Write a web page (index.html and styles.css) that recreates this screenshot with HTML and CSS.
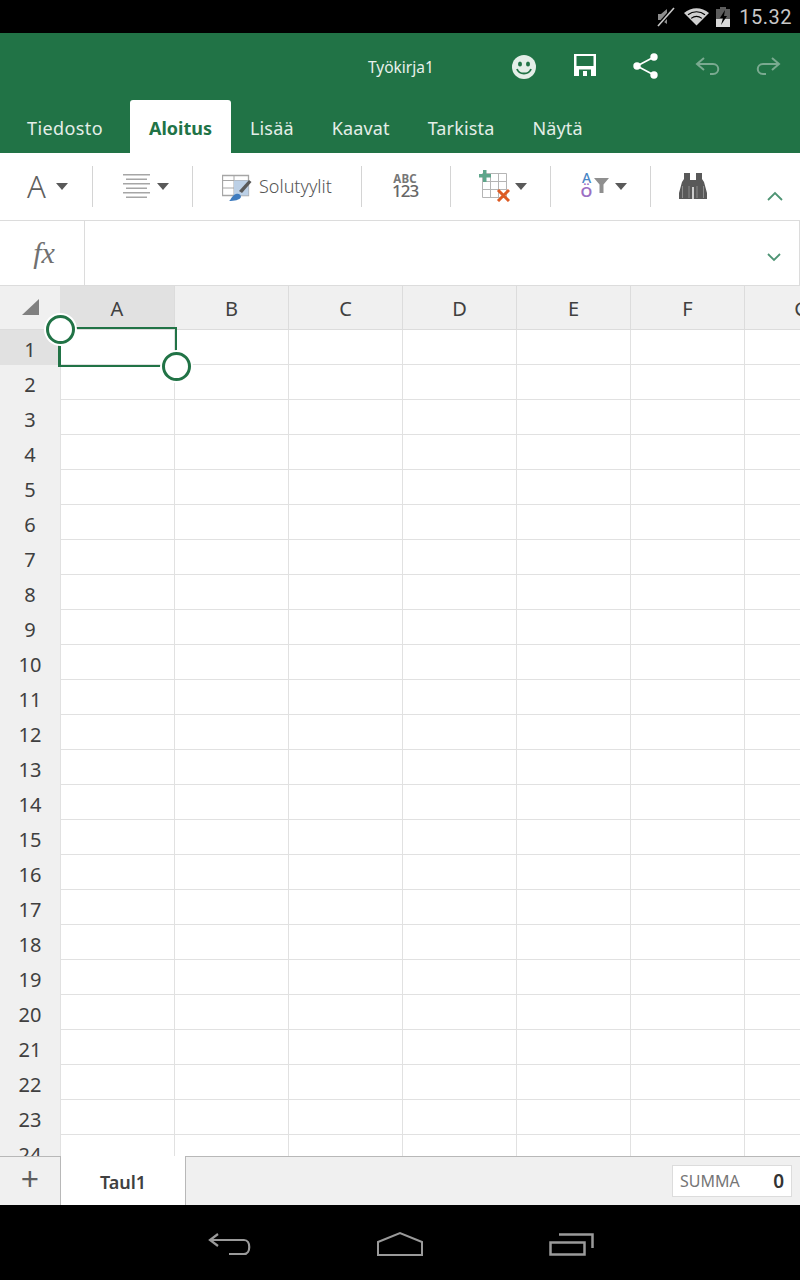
FILE: index.html
```html
<!DOCTYPE html>
<html lang="fi">

<head>
    <meta charset="UTF-8">
    <meta name="viewport" content="width=device-width, initial-scale=1.0">
    <title>Työkirja1</title>
    <link rel="stylesheet" href="styles.css">
</head>

<body>
    <!-- Android status bar -->
    <div class="status-bar">
        <svg class="st-mute" width="18" height="20" viewBox="0 0 18 20">
            <path d="M1 7h3l6-5v15l-6-4H1z" fill="#8c8c8c"/>
            <path d="M1 19L17 1" stroke="#000" stroke-width="4"/>
            <path d="M1 19L17 1" stroke="#c8c8c8" stroke-width="1.6"/>
        </svg>
        <svg class="st-wifi" width="25" height="20" viewBox="0 0 28 20">
            <path d="M14 19.500L0 5.500C8 -1.500 20 -1.500 28 5.500z" fill="#d0d0d0"/>
            <path d="M4.500 7.500C10 3 18 3 23.500 7.500M8 11.500C12 8.500 16 8.500 20 11.500" fill="none" stroke="#000" stroke-width="1.3"/>
        </svg>
        <svg class="st-batt" width="14" height="20" viewBox="0 0 14 20">
            <path d="M4 0h6v2h4v18H0V2h4z" fill="#5c5c5c"/>
            <path d="M0 12h14v8H0z" fill="#d8d8d8"/>
            <path d="M9 3L4 11h3l-2 7 6-9H8z" fill="#000"/>
        </svg>
        <span class="clock">15.32</span>
    </div>

    <!-- Title bar -->
    <div class="title-bar">
        <span class="doc-name">Työkirja1</span>
        <svg class="tb-icon ic-smile" width="26" height="26" viewBox="0 0 26 26">
            <circle cx="13" cy="13" r="12" fill="#e4eee8"/>
            <ellipse cx="9" cy="10" rx="2" ry="2.6" fill="#217346"/>
            <ellipse cx="17" cy="10" rx="2" ry="2.6" fill="#217346"/>
            <path d="M6 15c2 6 12 6 14 0" fill="none" stroke="#217346" stroke-width="1.8"/>
        </svg>
        <svg class="tb-icon ic-save" width="24" height="24" viewBox="0 0 24 24">
            <path d="M1 1h22v22H1z" fill="#fff"/>
            <path d="M3.500 3h17v10h-17z" fill="#217346"/>
            <path d="M6 16.500h12v6.500H6z" fill="#217346"/>
            <path d="M10 18h4v5h-4z" fill="#fff"/>
        </svg>
        <svg class="tb-icon ic-share" width="28" height="28" viewBox="0 0 28 28">
            <path d="M22 5L5 14l17 9" fill="none" stroke="#fff" stroke-width="1.7"/>
            <circle cx="22" cy="5" r="3.700" fill="#fff"/>
            <circle cx="5" cy="14" r="3.700" fill="#fff"/>
            <circle cx="22" cy="23" r="3.700" fill="#fff"/>
        </svg>
        <svg class="tb-icon ic-undo" width="26" height="20" viewBox="0 0 26 20">
            <path d="M9 2L2 8l7 6M2 8h16c7 0 7 10 0 10h-3" fill="none" stroke="#7aaa90" stroke-width="2"/>
        </svg>
        <svg class="tb-icon ic-redo" width="26" height="20" viewBox="0 0 26 20">
            <path d="M17 2l7 6-7 6M24 8H8c-7 0-7 10 0 10h3" fill="none" stroke="#7aaa90" stroke-width="2"/>
        </svg>
    </div>

    <!-- Ribbon tabs -->
    <div class="tabs">
        <span class="tab tab-file">Tiedosto</span>
        <span class="tab active">Aloitus</span>
        <span class="tab">Lisää</span>
        <span class="tab">Kaavat</span>
        <span class="tab">Tarkista</span>
        <span class="tab">Näytä</span>
    </div>

    <!-- Ribbon commands -->
    <div class="ribbon">
        <div class="group g-font">
            <span class="font-a">A</span>
            <span class="caret"></span>
        </div>
        <div class="group g-align">
            <svg width="27" height="24" viewBox="0 0 27 24">
                <path d="M0 .75h27M3 5.250h21M0 9.750h27M3 14.250h21M0 18.750h27M3 23.250h21" stroke="#a6a6a6" stroke-width="1.5"/>
            </svg>
            <span class="caret"></span>
        </div>
        <div class="group g-styles">
            <svg class="ic-styles" width="30" height="27" viewBox="0 0 30 27">
                <path d="M.5 1.500h26v20H.5z" fill="#fff" stroke="#a6a6a6" stroke-width="1.300"/>
                <path d="M.5 6.500h26M12 1.500v20M.5 14h11.500" stroke="#a6a6a6"/>
                <path d="M12 6.500h14.500v15H12z" fill="#bcd0e6"/>
                <path d="M17 17L27 6l2.500 2L20 19z" fill="#595959"/>
                <path d="M7 27c2-1 3-6 7-7 3-1 5 1 5 3-1 3-7 4-12 4z" fill="#3f7cbf"/>
            </svg>
            <span class="styles-label">Solutyylit</span>
        </div>
        <div class="group g-number">
            <div class="abc">
                <span class="abc-top">ABC</span>
                <span class="abc-bottom">123</span>
            </div>
        </div>
        <div class="group g-insert">
            <svg width="31" height="32" viewBox="0 0 31 32">
                <path d="M3.500 3.500h24v24h-24zM3.500 11.500h24M3.500 19.500h24M11.500 3.500v24M19.500 3.500v24" fill="none" stroke="#b5b5b5"/>
                <path d="M4 0h3.500v4H12v3.500H7.500V12H4V7.500H0V4h4z" fill="#5ea68b"/>
                <path d="M19 20l11 11M30 20L19 31" stroke="#dd5b24" stroke-width="3"/>
            </svg>
            <span class="caret caret-near"></span>
        </div>
        <div class="group g-sort">
            <div class="sort-letters">
                <span class="sort-a">A</span>
                <span class="sort-o">Ö</span>
            </div>
            <svg class="funnel" width="15" height="15" viewBox="0 0 15 15">
                <path d="M0 0h15L9.500 6.500V15h-4V6.500z" fill="#8f8f8f"/>
            </svg>
            <span class="caret caret-sort"></span>
        </div>
        <div class="group g-find">
            <svg width="28" height="26" viewBox="0 0 28 26">
                <path d="M5 0h6v7h6V0h6v6l2 3 3 11v6H14.700V14h-1.400v12H0v-6l3-11 2-3z" fill="#595959"/>
                <path d="M3.500 13v12M10 13v12M18 13v12M24.500 13v12" stroke="#9a9a9a" stroke-width=".8"/>
            </svg>
        </div>
        <svg class="collapse" width="16" height="10" viewBox="0 0 16 10">
            <path d="M1 9l7-7 7 7" fill="none" stroke="#4e9474" stroke-width="1.8"/>
        </svg>
    </div>

    <!-- Formula bar -->
    <div class="formula-bar">
        <div class="fx"><span>fx</span></div>
        <div class="formula-input">
            <svg width="14" height="9" viewBox="0 0 14 9">
                <path d="M1 1l6 6 6-6" fill="none" stroke="#4e9474" stroke-width="1.8"/>
            </svg>
        </div>
    </div>

    <!-- Sheet -->
    <div class="sheet">
        <div class="col-head">
            <div class="corner"><span class="corner-mark"></span></div>
            <div class="col selected">A</div>
            <div class="col">B</div>
            <div class="col">C</div>
            <div class="col">D</div>
            <div class="col">E</div>
            <div class="col">F</div>
            <div class="col">G</div>
        </div>
        <div class="rows">
            <div class="row"><span class="row-num selected">1</span></div>
            <div class="row"><span class="row-num">2</span></div>
            <div class="row"><span class="row-num">3</span></div>
            <div class="row"><span class="row-num">4</span></div>
            <div class="row"><span class="row-num">5</span></div>
            <div class="row"><span class="row-num">6</span></div>
            <div class="row"><span class="row-num">7</span></div>
            <div class="row"><span class="row-num">8</span></div>
            <div class="row"><span class="row-num">9</span></div>
            <div class="row"><span class="row-num">10</span></div>
            <div class="row"><span class="row-num">11</span></div>
            <div class="row"><span class="row-num">12</span></div>
            <div class="row"><span class="row-num">13</span></div>
            <div class="row"><span class="row-num">14</span></div>
            <div class="row"><span class="row-num">15</span></div>
            <div class="row"><span class="row-num">16</span></div>
            <div class="row"><span class="row-num">17</span></div>
            <div class="row"><span class="row-num">18</span></div>
            <div class="row"><span class="row-num">19</span></div>
            <div class="row"><span class="row-num">20</span></div>
            <div class="row"><span class="row-num">21</span></div>
            <div class="row"><span class="row-num">22</span></div>
            <div class="row"><span class="row-num">23</span></div>
            <div class="row"><span class="row-num">24</span></div>
        </div>
        <!-- Selected cell with its two drag handles -->
        <div class="selection">
            <span class="handle handle-start"></span>
            <span class="handle handle-end"></span>
        </div>
    </div>

    <!-- Sheet tabs and sum -->
    <div class="sheet-bar">
        <div class="add-sheet">+</div>
        <div class="sheet-tab">Taul1</div>
        <div class="sheet-rest">
            <div class="sum">
                <span class="sum-label">SUMMA</span>
                <span class="sum-value">0</span>
            </div>
        </div>
    </div>

    <!-- Android navigation bar -->
    <div class="nav-bar">
        <svg class="nav-back" width="44" height="26" viewBox="0 0 44 26">
            <path d="M10 3L2 9l8 6M2 9h34c7 0 7 14 0 14H21" fill="none" stroke="#9a9a9a" stroke-width="2.200"/>
        </svg>
        <svg class="nav-home" width="48" height="26" viewBox="0 0 48 26">
            <path d="M2 11L24 2l22 9v13H2z" fill="none" stroke="#9a9a9a" stroke-width="2"/>
        </svg>
        <svg class="nav-recent" width="46" height="26" viewBox="0 0 46 26">
            <path d="M1.500 11.500h34v12h-34z" fill="none" stroke="#9a9a9a" stroke-width="2.500"/>
            <path d="M10 3.500h33.500V17" fill="none" stroke="#9a9a9a" stroke-width="2.500"/>
        </svg>
    </div>
</body>

</html>
```

FILE: styles.css
```css
html, body {
    margin: 0;
    padding: 0;
    height: 100%;
    overflow: hidden;
}

body {
    width: 800px;
    height: 1280px;
    display: flex;
    flex-direction: column;
    font-family: "Noto Sans", "Open Sans", sans-serif;
    background: #fff;
}

/* Status bar */
.status-bar {
    height: 33px;
    background: #000;
    display: flex;
    align-items: center;
    justify-content: flex-end;
    padding-right: 8px;
    flex-shrink: 0;
}

.st-mute {
    margin-right: 9px;
}

.st-wifi {
    margin-right: 7px;
}

.st-batt {
    margin-right: 9px;
}

.clock {
    font-family: Roboto, sans-serif;
    font-size: 20px;
    letter-spacing: 0.5px;
    color: #c8c8c8;
}

/* Title bar */
.title-bar {
    height: 67px;
    background: #217346;
    position: relative;
    display: flex;
    align-items: center;
    flex-shrink: 0;
}

.doc-name {
    position: absolute;
    left: 368px;
    top: 23px;
    font-size: 15.5px;
    line-height: 22px;
    color: #e9f1ec;
}

.tb-icon {
    position: absolute;
}

.ic-smile {
    left: 511px;
    top: 21px;
}

.ic-save {
    left: 573px;
    top: 20px;
}

.ic-share {
    left: 632px;
    top: 19px;
}

.ic-undo {
    left: 695px;
    top: 23px;
}

.ic-redo {
    left: 755px;
    top: 23px;
}

/* Ribbon tabs */
.tabs {
    height: 53px;
    background: #217346;
    display: flex;
    padding-left: 8px;
    flex-shrink: 0;
}

.tab {
    padding: 0 19px;
    font-size: 18px;
    letter-spacing: 0.15px;
    line-height: 56px;
    color: #e4eee8;
}

.tab-file {
    margin-right: 8px;
    letter-spacing: 0.4px;
}

.tab.active {
    background: #fff;
    color: #217346;
    font-weight: 700;
    letter-spacing: 0;
    border-radius: 3px 3px 0 0;
}

/* Ribbon commands */
.ribbon {
    height: 67px;
    background: #fff;
    display: flex;
    align-items: center;
    position: relative;
    flex-shrink: 0;
}

.group {
    height: 41px;
    box-sizing: border-box;
    display: flex;
    align-items: center;
    border-right: 1px solid #d4d4d4;
    margin-top: -1px;
}

.g-font {
    width: 93px;
    padding-left: 27px;
}

.g-align {
    width: 100px;
    padding-left: 30px;
}

.g-styles {
    width: 169px;
    padding-left: 29px;
}

.g-number {
    width: 89px;
    padding-left: 30px;
}

.g-insert {
    width: 100px;
    padding-left: 28px;
}

.g-sort {
    width: 100px;
    padding-left: 29px;
}

.g-find {
    width: 86px;
    padding-left: 28px;
    border-right: none;
}

.caret {
    width: 0;
    height: 0;
    border-left: 6px solid transparent;
    border-right: 6px solid transparent;
    border-top: 7px solid #595959;
    margin-left: 7px;
}

.caret-near {
    margin-left: 5px;
}

.caret-sort {
    margin-left: 6px;
}

.font-a {
    font-size: 31px;
    line-height: 36px;
    font-weight: 300;
    color: #5f5f5f;
    margin-right: 3px;
}

.ic-styles {
    margin-top: 3px;
}

.styles-label {
    font-size: 18px;
    font-weight: 300;
    color: #555;
    margin-left: 7px;
}

.abc {
    display: flex;
    flex-direction: column;
    align-items: center;
    margin-top: -2px;
}

.abc-top {
    font-size: 11.5px;
    line-height: 11px;
    font-weight: 700;
    letter-spacing: 0.3px;
    color: #777;
}

.abc-bottom {
    font-size: 17px;
    line-height: 14px;
    font-weight: 500;
    letter-spacing: -1px;
    color: #666;
}

.sort-letters {
    display: flex;
    flex-direction: column;
    align-items: center;
    width: 13px;
    margin-top: -2px;
}

.sort-a {
    font-size: 14px;
    line-height: 13px;
    font-weight: 500;
    color: #4a86c5;
}

.sort-o {
    font-size: 15px;
    line-height: 15px;
    font-weight: 600;
    color: #9c6fc4;
}

.funnel {
    margin-left: 1px;
    margin-top: -1px;
}

.collapse {
    position: absolute;
    left: 767px;
    top: 38px;
}

/* Formula bar */
.formula-bar {
    height: 66px;
    box-sizing: border-box;
    display: flex;
    border-top: 1px solid #dcdcdc;
    border-right: 1px solid #dcdcdc;
    border-bottom: 1px solid #dcdcdc;
    flex-shrink: 0;
}

.fx {
    width: 85px;
    box-sizing: border-box;
    border-right: 1px solid #dcdcdc;
    display: flex;
    align-items: center;
    justify-content: center;
    padding-left: 4px;
    font-family: "Liberation Serif", serif;
    font-style: italic;
    font-size: 30px;
    color: #707070;
}

.formula-input {
    flex: 1;
    display: flex;
    align-items: center;
    justify-content: flex-end;
    padding: 9px 18px 0 0;
}

/* Sheet */
.sheet {
    position: relative;
    flex: 1;
    overflow: hidden;
    min-height: 0;
}

.col-head {
    height: 44px;
    box-sizing: border-box;
    display: flex;
    background: #f0f0f0;
    border-bottom: 1px solid #dcdcdc;
}

.corner {
    width: 60px;
    flex-shrink: 0;
    position: relative;
}

.corner-mark {
    position: absolute;
    left: 22px;
    top: 13px;
    width: 0;
    height: 0;
    border-left: 17px solid transparent;
    border-bottom: 16px solid #808080;
}

.col {
    width: 114px;
    flex-shrink: 0;
    box-sizing: border-box;
    border-right: 1px solid #dcdcdc;
    font-size: 20px;
    line-height: 45px;
    text-align: center;
    color: #404040;
}

.col.selected {
    width: 115px;
    background: #e1e1e1;
}

/* vertical grid lines come from the background */
.rows {
    background-image: repeating-linear-gradient(90deg, #e1e1e1 0, #e1e1e1 1px, transparent 1px, transparent 114px);
    background-position: 60px 0;
    background-repeat: no-repeat;
    background-size: 100% 100%;
}

.row {
    height: 35px;
    box-sizing: border-box;
    border-bottom: 1px solid #e1e1e1;
}

.row-num {
    display: block;
    width: 60px;
    height: 35px;
    background: #f0f0f0;
    font-size: 20px;
    line-height: 39px;
    text-align: center;
    color: #404040;
}

.row-num.selected {
    background: #e1e1e1;
}

.selection {
    position: absolute;
    left: 58px;
    top: 41px;
    width: 114px;
    height: 36px;
    border: 2px solid #217346;
    border-left-width: 3px;
}

.handle {
    position: absolute;
    width: 23px;
    height: 23px;
    border: 3px solid #217346;
    border-radius: 50%;
    background: #fff;
    box-shadow: 0 0 0 2px #fff;
}

.handle-start {
    left: -15px;
    top: -14px;
}

.handle-end {
    right: -16px;
    bottom: -16px;
}

/* Sheet tabs and sum */
.sheet-bar {
    height: 49px;
    display: flex;
    background: #f0f0f0;
    flex-shrink: 0;
}

.add-sheet {
    width: 61px;
    box-sizing: border-box;
    border-top: 1px solid #b8b8b8;
    border-right: 1px solid #b8b8b8;
    font-size: 32px;
    line-height: 44px;
    text-align: center;
    color: #5f5f5f;
}

.sheet-tab {
    width: 124px;
    background: #fff;
    font-size: 18px;
    font-weight: 600;
    line-height: 52px;
    text-align: center;
    color: #404040;
}

.sheet-rest {
    flex: 1;
    box-sizing: border-box;
    border-top: 1px solid #b8b8b8;
    border-left: 1px solid #b8b8b8;
    display: flex;
    justify-content: flex-end;
    align-items: flex-start;
    padding: 8px 8px 0 0;
}

.sum {
    width: 120px;
    height: 32px;
    box-sizing: border-box;
    background: #fff;
    border: 1px solid #dcdcdc;
    display: flex;
    justify-content: space-between;
    align-items: center;
    padding: 0 7px;
}

.sum-label {
    font-size: 16px;
    color: #767676;
}

.sum-value {
    font-size: 19px;
    font-weight: 600;
    color: #333;
}

/* Android navigation bar */
.nav-bar {
    height: 75px;
    background: #000;
    position: relative;
    flex-shrink: 0;
}

.nav-bar svg {
    position: absolute;
    top: 26px;
}

.nav-back {
    left: 208px;
}

.nav-home {
    left: 376px;
}

.nav-recent {
    left: 549px;
}
```
